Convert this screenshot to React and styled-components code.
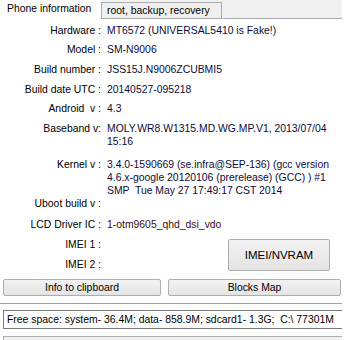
import React from 'react';
import styled, { createGlobalStyle } from 'styled-components';

const Global = createGlobalStyle`
  html, body {
    margin: 0;
    padding: 0;
    background: #ffffff;
  }
  body {
    font-family: "Liberation Sans", Arial, sans-serif;
    font-size: 10.4px;
    color: #000;
  }
`;

const Window = styled.div`
  width: 355px;
  height: 340px;
  overflow: hidden;
  background: #fff;
`;

const Panel = styled.div`
  width: 342px;
  display: flex;
  flex-direction: column;
`;

const TabStrip = styled.div`
  display: flex;
  height: 18px;
  border-bottom: 1px solid #adadad;
`;

const ActiveTab = styled.div`
  width: 94px;
  padding-left: 7px;
  background: #fff;
  line-height: 18px;
  margin-bottom: -1px;
  height: 19px;
  white-space: nowrap;
`;

const TabRest = styled.div`
  flex: 1;
  display: flex;
  align-items: flex-end;
  background: #f0f0f0;
`;

const Tab = styled.div`
  height: 15px;
  line-height: 15px;
  padding: 0 0 0 5px;
  border: 1px solid #adadad;
  border-bottom: none;
  background: #f0f0f0;
  width: 114px;
  white-space: nowrap;
`;

const Info = styled.div`
  display: flex;
  flex-direction: column;
  padding-top: 5px;
`;

const Row = styled.div`
  display: grid;
  grid-template-columns: 101px 1fr;
  column-gap: 6px;
  margin-top: ${p => p.$mt ?? 7}px;
  line-height: 13px;
`;

const Label = styled.div`
  text-align: right;
  white-space: pre;
  color: #000;
`;

const Value = styled.div`
  color: ${p => p.$color || '#0c0c3a'};
  white-space: pre;
`;

const ImeiBlock = styled.div`
  display: flex;
  align-items: center;
`;

const ImeiRows = styled.div`
  display: flex;
  flex-direction: column;
  width: 140px;
`;

const Button = styled.button`
  font-family: "Liberation Sans", Arial, sans-serif;
  font-size: 10.4px;
  color: #000;
  border: 1px solid #adadad;
  border-radius: 2px;
  background: linear-gradient(#f2f2f2, #e4e4e4);
  padding: 0;
  cursor: default;
`;

const NvramButton = styled(Button)`
  width: 102px;
  height: 32px;
  margin-left: auto;
  margin-right: 12px;
  margin-top: 7px;
  font-size: 11.5px;
`;

const ButtonRow = styled.div`
  display: flex;
  gap: 7px;
  padding: 0 1px 0 3px;
  margin-top: 8px;
`;

const WideButton = styled(Button)`
  height: 17px;
  width: ${p => p.$w}px;
  line-height: 15px;
`;

const Separator = styled.div`
  height: 1px;
  background: #a0a0a0;
  margin-top: 7px;
`;

const Field = styled.div`
  margin: 6px 0 0 3px;
  height: 17px;
  border: 1px solid #7a7a7a;
  border-right: none;
  padding-left: 3px;
  line-height: 17px;
  white-space: pre;
  overflow: hidden;
`;

const StatusBox = styled.div`
  margin: 7px 0 0 3px;
  height: 10px;
  border: 1px solid #adadad;
  border-right: none;
  background: #f0f0f0;
`;

const rows = [
  { label: 'Hardware :', lines: ['MT6572 (UNIVERSAL5410 is Fake!)'], mt: 0 },
  { label: 'Model :', lines: ['SM-N9006'], mt: 6 },
  { label: 'Build number :', lines: ['JSS15J.N9006ZCUBMI5'] },
  { label: 'Build date UTC :', lines: ['20140527-095218'] },
  { label: 'Android  v :', lines: ['4.3'], mt: 6 },
  { label: 'Baseband v:', lines: ['MOLY.WR8.W1315.MD.WG.MP.V1, 2013/07/04', '15:16'] },
  {
    label: 'Kernel v :',
    lines: [
      '3.4.0-1590669 (se.infra@SEP-136) (gcc version',
      '4.6.x-google 20120106 (prerelease) (GCC) ) #1',
      'SMP  Tue May 27 17:49:17 CST 2014',
    ],
    mt: 10,
  },
  { label: 'Uboot build v :', lines: [''], mt: 0 },
  { label: 'LCD Driver IC :', lines: ['1-otm9605_qhd_dsi_vdo'], color: '#3a0c12', mt: 8 },
];

const App = () => {
  return (
    <Window>
      <Global />
      <Panel>
        <TabStrip>
          <ActiveTab>Phone information</ActiveTab>
          <TabRest>
            <Tab>root, backup, recovery</Tab>
          </TabRest>
        </TabStrip>

        <Info>
          {rows.map(r => (
            <Row key={r.label} $mt={r.mt}>
              <Label>{r.label}</Label>
              <Value $color={r.color}>{r.lines.join('\n')}</Value>
            </Row>
          ))}
          <ImeiBlock>
            <ImeiRows>
              <Row>
                <Label>IMEI 1 :</Label>
                <Value />
              </Row>
              <Row>
                <Label>IMEI 2 :</Label>
                <Value />
              </Row>
            </ImeiRows>
            <NvramButton>IMEI/NVRAM</NvramButton>
          </ImeiBlock>
        </Info>

        <ButtonRow>
          <WideButton $w={158}>Info to clipboard</WideButton>
          <WideButton $w={173}>Blocks Map</WideButton>
        </ButtonRow>

        <Separator />
        <Field>Free space: system- 36.4M; data- 858.9M; sdcard1- 1.3G;  C:\ 77301M</Field>
        <StatusBox />
      </Panel>
    </Window>
  );
};

export default App;
